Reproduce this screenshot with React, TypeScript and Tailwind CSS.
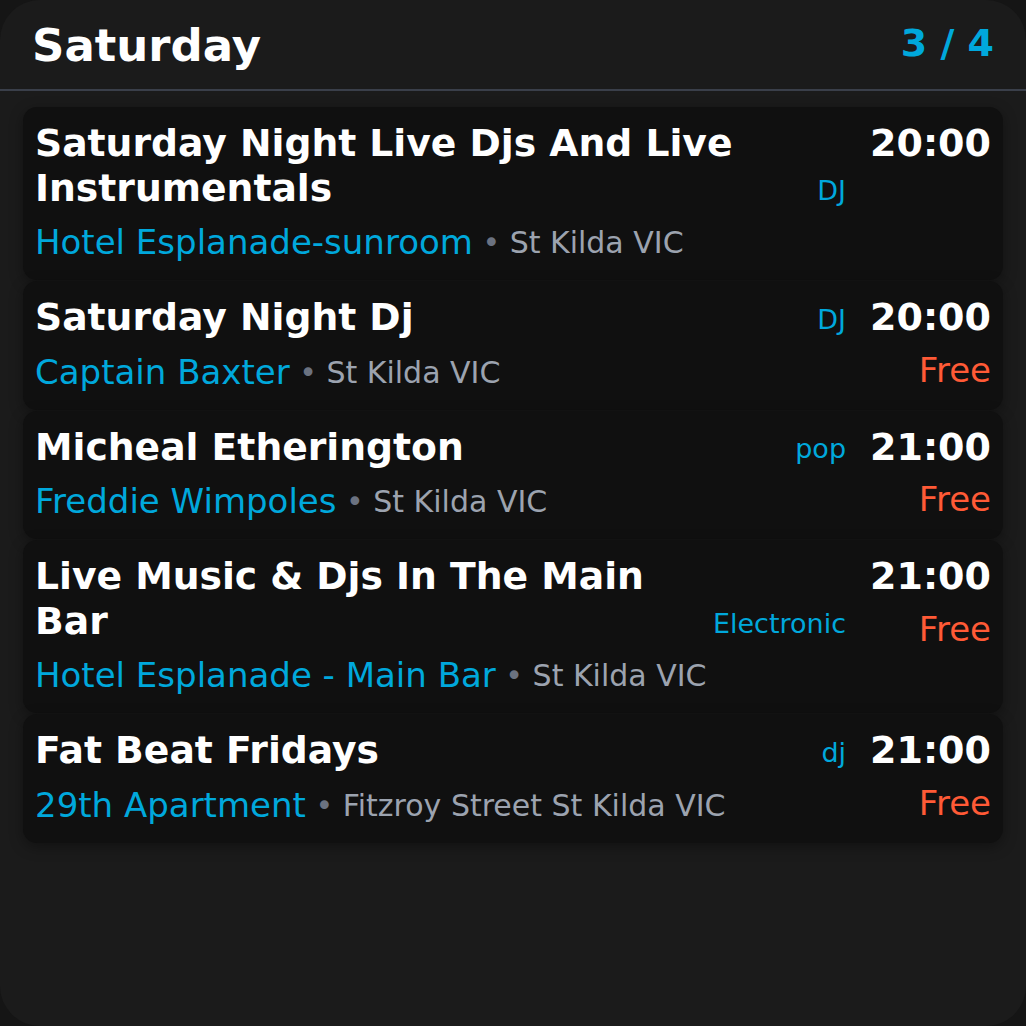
import React from 'react';

type Gig = {
  title: string;
  tag: string;
  time: string;
  venue: string;
  location: string;
  price?: string;
};

const gigs: Gig[] = [
  {
    title: 'Saturday Night Live Djs And Live Instrumentals',
    tag: 'DJ',
    time: '20:00',
    venue: 'Hotel Esplanade-sunroom',
    location: 'St Kilda VIC',
  },
  {
    title: 'Saturday Night Dj',
    tag: 'DJ',
    time: '20:00',
    venue: 'Captain Baxter',
    location: 'St Kilda VIC',
    price: 'Free',
  },
  {
    title: 'Micheal Etherington',
    tag: 'pop',
    time: '21:00',
    venue: 'Freddie Wimpoles',
    location: 'St Kilda VIC',
    price: 'Free',
  },
  {
    title: 'Live Music & Djs In The Main Bar',
    tag: 'Electronic',
    time: '21:00',
    venue: 'Hotel Esplanade - Main Bar',
    location: 'St Kilda VIC',
    price: 'Free',
  },
  {
    title: 'Fat Beat Fridays',
    tag: 'dj',
    time: '21:00',
    venue: '29th Apartment',
    location: 'Fitzroy Street St Kilda VIC',
    price: 'Free',
  },
];

const GigCard: React.FC<{ gig: Gig }> = ({ gig }) => (
  <div className="flex gap-6 rounded-[14px] bg-[#101010] px-3 pt-[14px] pb-3 shadow-[0_4px_14px_rgba(0,0,0,0.35)]">
    <div className="min-w-0 flex-1">
      <div className="flex items-end gap-4">
        <h2 className="flex-1 text-[37.7px] font-bold leading-[1.2] text-white">{gig.title}</h2>
        <span className="shrink-0 text-[27px] leading-[1.5] text-[#00a8dc]">{gig.tag}</span>
      </div>
      <div className="mt-1.5 flex items-center">
        <span className="text-[34px] leading-[1.5] text-[#00a8dc]">{gig.venue}</span>
        <span className="whitespace-pre text-[30px] leading-[1.5] text-[#9ca3af]">
          <span className="text-[#6b7280]"> • </span>
          {gig.location}
        </span>
      </div>
    </div>
    <div className="flex shrink-0 flex-col items-end">
      <span className="text-[38px] font-bold leading-[1.2] text-white">{gig.time}</span>
      {gig.price && (
        <span className="mt-1 text-[34px] leading-[1.5] text-[#ff5a36]">{gig.price}</span>
      )}
    </div>
  </div>
);

export default function App() {
  return (
    <div className="h-screen bg-[#151515] font-['DejaVu_Sans',sans-serif]">
      <div className="flex h-full flex-col overflow-hidden rounded-[40px] bg-[#1b1b1b]">
        <header className="flex items-center justify-between border-b-2 border-[#3a3f4a] px-8 pt-[19px] pb-4">
          <h1 className="text-[45px] font-bold leading-[1.2] text-white">Saturday</h1>
          <span className="mb-[5px] text-[38px] font-bold leading-[1.2] text-[#00a8dc]">3 / 4</span>
        </header>
        <main className="flex flex-col gap-px px-[23px] pt-4">
          {gigs.map((gig) => (
            <GigCard key={gig.title} gig={gig} />
          ))}
        </main>
      </div>
    </div>
  );
}
